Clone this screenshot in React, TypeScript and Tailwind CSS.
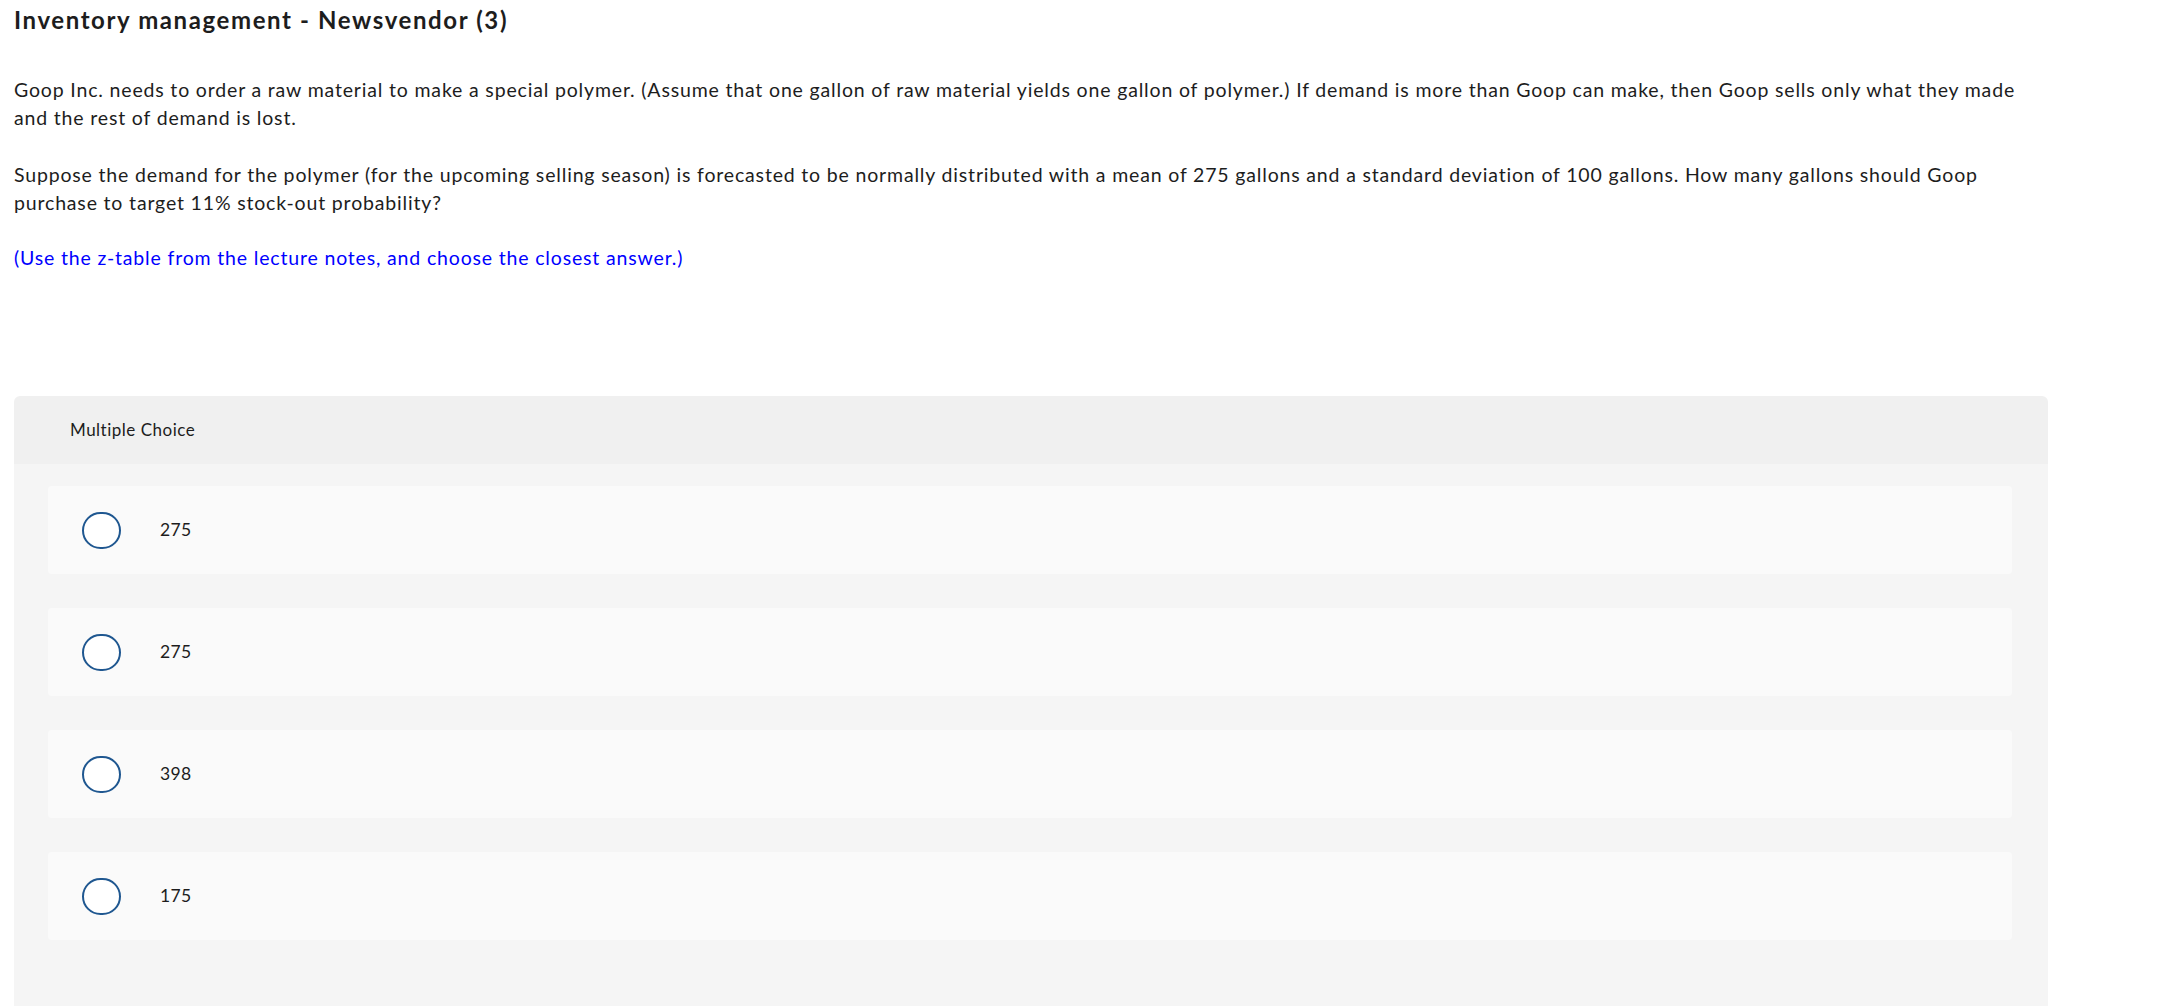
import React, { useState } from 'react';

const OPTIONS = ['275', '275', '398', '175'];

const App = () => {
  const [selected, setSelected] = useState<number | null>(null);

  return (
    <div className="min-h-screen bg-white text-[#1d1d1d] font-['Lato','Liberation_Sans',sans-serif]">
      <div className="w-[2034px] pl-[14px] pt-[5px]">
        {/* Title */}
        <h1 className="text-[24px] font-bold leading-[30px] tracking-[1.6px]">
          Inventory management - Newsvendor (3)
        </h1>

        {/* Question */}
        <div className="mt-[41px] text-[19.5px] leading-[28px] tracking-[0.83px]">
          <p>
            Goop Inc. needs to order a raw material to make a special polymer. (Assume that one gallon of raw
            material yields one gallon of polymer.) If demand is more than Goop can make, then Goop sells only what
            they made and the rest of demand is lost.
          </p>
          <p className="mt-[29px]">
            Suppose the demand for the polymer (for the upcoming selling season) is forecasted to be normally
            distributed with a mean of 275 gallons and a standard deviation of 100 gallons. How many gallons should
            Goop purchase to target 11% stock-out probability?
          </p>
          <p className="mt-[27px] text-[#0000ff]">
            (Use the z-table from the lecture notes, and choose the closest answer.)
          </p>
        </div>
      </div>

      {/* Multiple choice panel */}
      <div className="ml-[14px] mt-[124px] w-[2034px] rounded-t-[6px] overflow-hidden">
        <div className="h-[68px] bg-[#f0f0f0] pl-[56px] flex items-center text-[17px] tracking-[0.5px]">
          Multiple Choice
        </div>
        <div className="bg-[#f5f5f5] pt-[22px] pl-[34px] pr-[36px] pb-[80px] flex flex-col gap-[34px]">
          {OPTIONS.map((opt, i) => (
            <button
              key={i}
              onClick={() => setSelected(i)}
              className="h-[88px] bg-[#fafafa] rounded-[4px] pl-[34px] flex items-center text-left"
            >
              <span className="w-[39px] h-[37px] rounded-full border-2 border-[#1f5790] bg-white flex items-center justify-center">
                {selected === i && <span className="w-[19px] h-[19px] rounded-full bg-[#1f5790]" />}
              </span>
              <span className="ml-[39px] text-[17.5px] tracking-[0.4px]">{opt}</span>
            </button>
          ))}
        </div>
      </div>
    </div>
  );
};

export default App;
